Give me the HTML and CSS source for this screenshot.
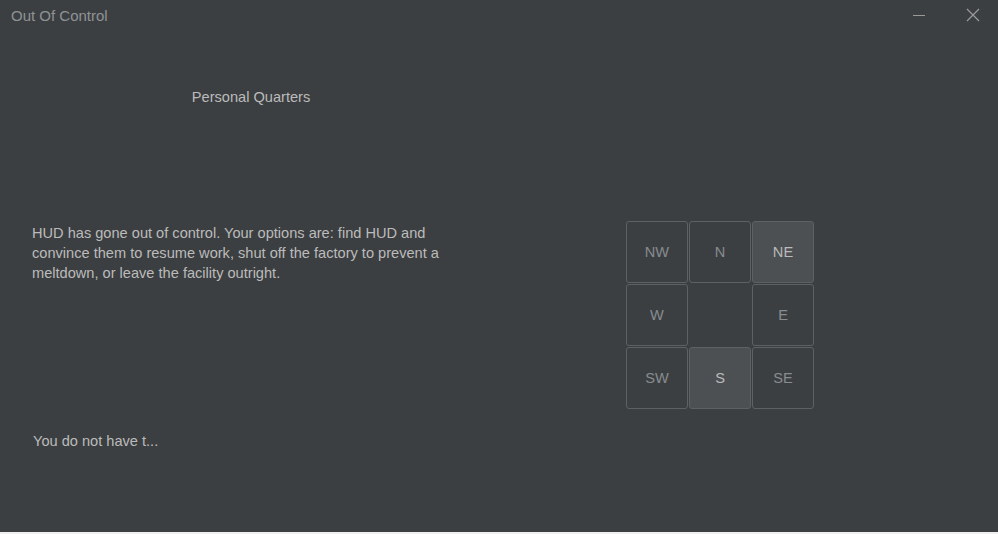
FILE: index.html
```html
<!DOCTYPE html>
<html>
<head>
<meta charset="utf-8">
<link rel="stylesheet" href="styles.css">
</head>
<body>
<div class="window">
  <div class="titlebar">
    <span class="title">Out Of Control</span>
    <div class="controls">
      <span class="ctl min"><svg width="14" height="14" viewBox="0 0 14 14"><line x1="1" y1="6.5" x2="13" y2="6.5" stroke="#9a9a94" stroke-width="1"/></svg></span>
      <span class="ctl close"><svg width="14" height="14" viewBox="0 0 14 14"><path d="M1 1 L13 13 M13 1 L1 13" stroke="#9a9a9a" stroke-width="1.2"/></svg></span>
    </div>
  </div>
  <div class="main">
    <div class="left">
      <div class="room">Personal Quarters</div>
      <p class="desc">HUD has gone out of control. Your options are: find HUD and convince them to resume work, shut off the factory to prevent a meltdown, or leave the facility outright.</p>
      <div class="status">You do not have t...</div>
    </div>
    <div class="right">
      <div class="compass">
        <button class="dir">NW</button>
        <button class="dir">N</button>
        <button class="dir on">NE</button>
        <button class="dir">W</button>
        <span class="blank"></span>
        <button class="dir">E</button>
        <button class="dir">SW</button>
        <button class="dir on">S</button>
        <button class="dir">SE</button>
      </div>
    </div>
  </div>
</div>
</body>
</html>
```

FILE: styles.css
```css
html, body {
  margin: 0;
  padding: 0;
  background: #f0f0f0;
}
body {
  font-family: "Liberation Sans", Arial, sans-serif;
  font-size: 14.6px;
  color: #bbbbbb;
}
.window {
  width: 998px;
  height: 532px;
  background: #3c3f41;
  overflow: hidden;
  box-sizing: border-box;
}
.titlebar {
  height: 32px;
  display: flex;
  align-items: center;
  justify-content: space-between;
}
.title {
  padding-left: 11px;
  color: #8f9396;
  font-size: 15px;
  margin-top: -2px;
}
.controls {
  display: flex;
  align-items: center;
}
.ctl {
  display: flex;
  width: 46px;
  height: 30px;
  align-items: center;
  justify-content: center;
}
.min { margin-right: 8px; margin-top: -1px; }
.close { margin-right: 2px; margin-top: -2px; }
.main {
  display: flex;
}
.left {
  width: 438px;
  padding-left: 32px;
}
.room {
  margin-top: 55px;
  line-height: 20px;
  text-align: center;
}
.desc {
  margin: 116px 0 0 0;
  width: 432px;
  line-height: 20px;
}
.status {
  margin-top: 148px;
  padding-left: 1px;
  line-height: 20px;
}
.right {
  padding-left: 156px;
  padding-top: 189px;
}
.compass {
  display: grid;
  grid-template-columns: repeat(3, 62px);
  grid-template-rows: repeat(3, 62px);
  gap: 1px;
}
.dir {
  box-sizing: border-box;
  border: 1px solid #5e6162;
  border-radius: 3px;
  background: #3c3f41;
  color: #878c90;
  font-family: "Liberation Sans", Arial, sans-serif;
  font-size: 14.6px;
  padding: 0;
  margin: 0;
}
.dir.on {
  background: #4c5052;
  color: #bbbbbb;
}
```
